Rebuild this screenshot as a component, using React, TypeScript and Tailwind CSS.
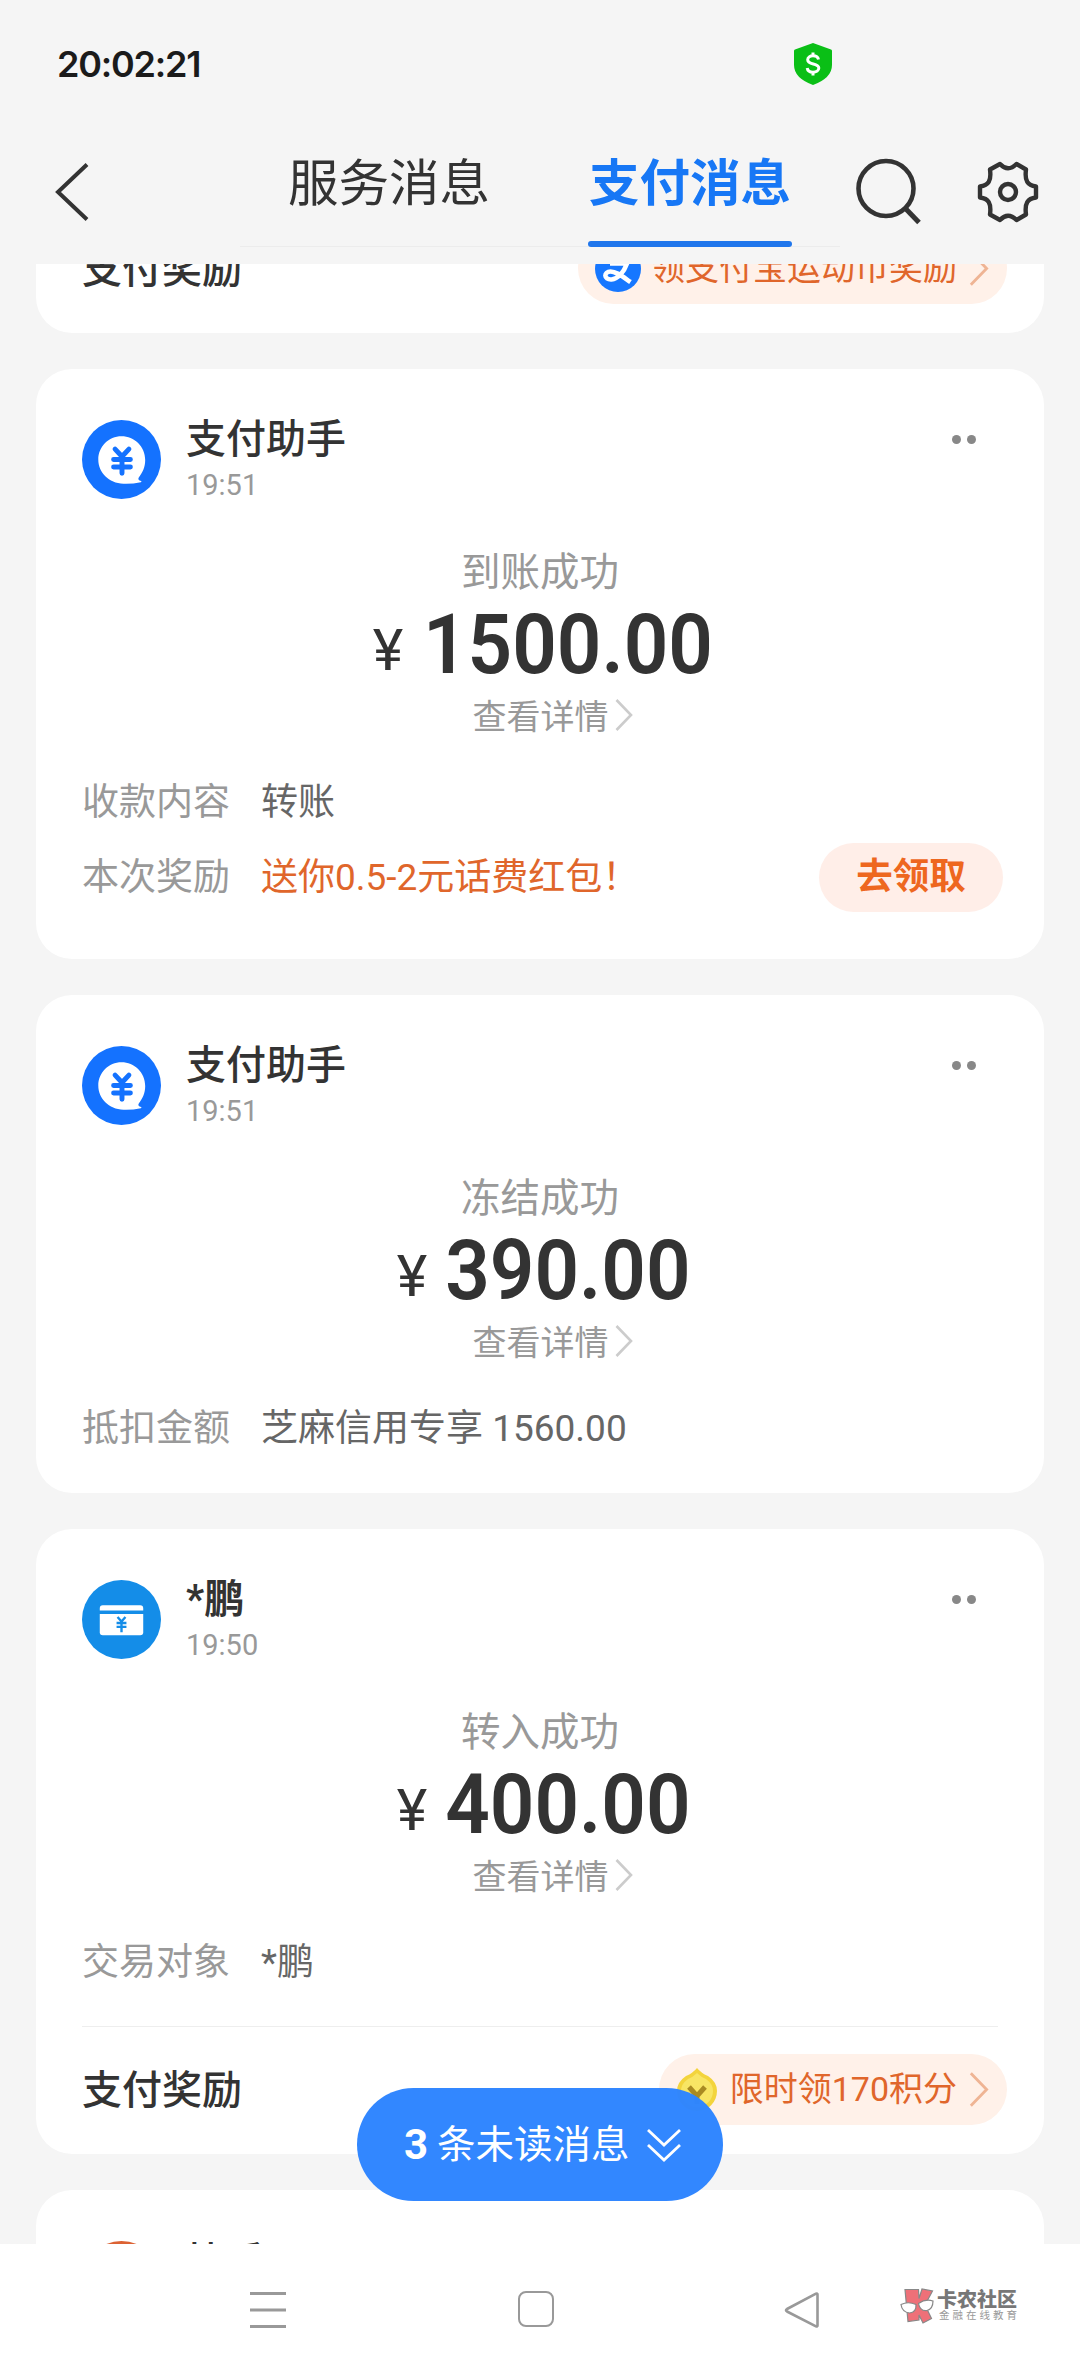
import type { ReactNode } from "react";

type Row = {
  label: string;
  value: string;
  highlight?: boolean;
  action?: string;
};

type Message = {
  id: number;
  icon: "assistant" | "wallet";
  sender: string;
  time: string;
  title: string;
  amount: string;
  rows: Row[];
  height: string;
};

const messages: Message[] = [
  {
    id: 1,
    icon: "assistant",
    sender: "支付助手",
    time: "19:51",
    title: "到账成功",
    amount: "1500.00",
    rows: [
      { label: "收款内容", value: "转账" },
      {
        label: "本次奖励",
        value: "送你0.5-2元话费红包！",
        highlight: true,
        action: "去领取",
      },
    ],
    height: "h-[590px]",
  },
  {
    id: 2,
    icon: "assistant",
    sender: "支付助手",
    time: "19:51",
    title: "冻结成功",
    amount: "390.00",
    rows: [{ label: "抵扣金额", value: "芝麻信用专享 1560.00" }],
    height: "h-[498px]",
  },
  {
    id: 3,
    icon: "wallet",
    sender: "*鹏",
    time: "19:50",
    title: "转入成功",
    amount: "400.00",
    rows: [{ label: "交易对象", value: "*鹏" }],
    height: "h-[497px]",
  },
];

function AssistantIcon() {
  return (
    <svg viewBox="0 0 80 80" className="size-[79px] shrink-0" fill="none">
      <circle cx="40" cy="40" r="40" fill="#1472ff" />
      <path
        d="M40 16.500C27 16.500 16.500 27 16.500 40S27 64 42 64.500q9 .3 17.500-1.500c1.200-.4.800-1.200-.5-1.600-1.700-.5-2.500-1.700-1.500-3.200C61.500 53 64 47.500 64 40.500 64 27 53 16.500 40 16.500Z"
        fill="#fff"
      />
      <path
        d="M33.500 29.500l7 7.500 7-7.500M32 40h17M32 47.500h17M40.500 38v16"
        stroke="#1472ff"
        strokeWidth="5"
        strokeLinecap="round"
      />
    </svg>
  );
}

function WalletIcon() {
  return (
    <svg viewBox="0 0 80 80" className="size-[79px] shrink-0" fill="none">
      <circle cx="40" cy="40" r="40" fill="#148de8" />
      <path d="M18 31v-2.500a3 3 0 0 1 3-3h38a3 3 0 0 1 3 3V31Z" fill="#fff" />
      <path d="M18 34.500h44V53a3 3 0 0 1-3 3H21a3 3 0 0 1-3-3Z" fill="#fff" />
      <path
        d="M36 37.500l4 4.500 4-4.500M35 43.500h10M35 47.500h10M40 42v11"
        stroke="#148de8"
        strokeWidth="2.400"
      />
    </svg>
  );
}

function ChevronRight({ className }: { className: string }) {
  return (
    <svg
      viewBox="0 0 18 34"
      className={`shrink-0 ${className}`}
      fill="none"
      stroke="currentColor"
      strokeWidth="2.600"
    >
      <path d="M1.500 2 16 17 1.500 32" />
    </svg>
  );
}

function StatusBar() {
  return (
    <div className="flex h-32 items-center pl-[57px]">
      <span className="w-[737px] font-['Inter','Noto_Sans_CJK_SC',sans-serif] text-[36px] font-semibold tracking-[-1.200px] text-[#1b1b1b]">
        20:02:21
      </span>
      <svg viewBox="0 0 38 42" className="h-[42px] w-[38px]" fill="none">
        <path
          d="M19 0 37 6.500q1 .4 1 1.500v14q0 13-19 20Q0 35 0 22V8q0-1.100 1-1.500Z"
          fill="#0abf16"
        />
        <path
          d="M24.500 16.500c-.5-2.500-2.700-3.700-5.500-3.700-3 0-5.300 1.500-5.300 4 0 5.700 11.100 2.700 11.100 8.200 0 2.600-2.500 4.200-5.800 4.200-3.100 0-5.400-1.400-5.800-4.200M19 9.500v3.500M19 29v3.500"
          stroke="#fff"
          strokeWidth="3"
        />
      </svg>
    </div>
  );
}

function Header() {
  return (
    <header className="flex h-[136px] items-start">
      <svg
        viewBox="0 0 40 64"
        className="mt-8 ml-[52px] h-16 w-10"
        fill="none"
        stroke="#333"
        strokeWidth="4"
      >
        <path d="M35 4.500 6 32l29 27.500" />
      </svg>
      <nav className="ml-[148px] flex h-[119px] w-[600px] border-b border-[#ececec] text-[50.500px] leading-[50px]">
        <span className="ml-[48px] w-[202px] pt-[26px] text-[#333]">
          服务消息
        </span>
        <span className="-mb-px ml-[98px] flex h-[119px] flex-col justify-between pt-[26px] font-bold text-[#1777f5]">
          <span className="text-center">支付消息</span>
          <span className="h-[6px] w-[204px] rounded-full bg-[#1f76ec]" />
        </span>
      </nav>
      <svg
        viewBox="0 0 68 70"
        className="mt-[29px] ml-[14px] h-[70px] w-[68px]"
        fill="none"
        stroke="#333"
        strokeWidth="4.600"
      >
        <circle cx="32" cy="31.500" r="27.500" />
        <path d="M51.500 51.500 65 65.500" strokeWidth="5" />
      </svg>
      <svg
        viewBox="0 0 64 64"
        className="mt-8 ml-[54px] size-16"
        fill="none"
        stroke="#333"
        strokeWidth="4.400"
        strokeLinejoin="round"
      >
        <path d="M24 4Q32 12.500 40.500 4L50 9.500C48.500 21 51.500 25.500 60 26.500V37.500C51.500 38.500 48.500 43 50 54.500L40.500 60Q32 51.500 24 60L14 54.500C15.500 43 12.500 38.500 4 37.500V26.500C12.500 25.500 15.500 21 14 9.500Z" />
        <circle cx="32" cy="32" r="8" />
      </svg>
    </header>
  );
}

function RewardBar({ children }: { children: ReactNode }) {
  return (
    <div className="flex h-[71px] items-center justify-between pr-[37px] pl-[46px]">
      <span className="pb-[5px] text-[40px] font-medium text-[#333]">
        支付奖励
      </span>
      <div className="flex h-[71px] items-center rounded-full bg-[#fff1e9] pr-[18px] pl-[17px] font-['Roboto','Noto_Sans_CJK_SC',sans-serif] text-[34px] text-[#e0662b]">
        {children}
        <ChevronRight className="ml-[12px] h-[37px] w-[20px] text-[#efb494]" />
      </div>
    </div>
  );
}

function MessageHeader({
  icon,
  sender,
  time,
}: Pick<Message, "icon" | "sender" | "time">) {
  return (
    <div className="flex h-[79px] font-['Roboto','Noto_Sans_CJK_SC',sans-serif]">
      {icon === "assistant" ? <AssistantIcon /> : <WalletIcon />}
      <div className="ml-[25px] flex-1">
        <div
          className={`text-[40px] leading-[40px] text-[#333] ${icon === "wallet" ? "font-bold" : "font-medium"}`}
        >
          {sender}
        </div>
        <div className="mt-[8px] text-[29px] leading-[34px] text-[#999]">
          {time}
        </div>
      </div>
      <div className="mt-[15px] mr-[22px] flex gap-[6px]">
        <span className="size-[9px] rounded-full bg-[#888]" />
        <span className="size-[9px] rounded-full bg-[#888]" />
      </div>
    </div>
  );
}

function MessageCard({
  message,
  footer,
}: {
  message: Message;
  footer?: ReactNode;
}) {
  return (
    <section className="shrink-0 rounded-[36px] bg-white">
      <div className={`px-[46px] pt-[51px] ${message.height}`}>
        <MessageHeader
          icon={message.icon}
          sender={message.sender}
          time={message.time}
        />
        <div className="mt-[50px] flex flex-col items-center">
          <div className="text-[39.500px] leading-[40px] text-[#999]">
            {message.title}
          </div>
          <div className="mt-[23px] flex h-[66px] items-baseline pl-[3px] font-['Roboto',sans-serif] leading-[66px] text-[#333]">
            <span className="relative -top-[3px] mr-[9px] text-[58px]">¥</span>
            <span className="-mr-[14px] inline-block scale-x-[0.93] text-[84px] font-semibold">
              {message.amount}
            </span>
          </div>
          <div className="mt-[17px] flex items-center pl-[25px] text-[34px] leading-[40px] text-[#999]">
            查看详情
            <ChevronRight className="ml-[6px] h-[34px] w-[18px] text-[#ccc]" />
          </div>
        </div>
        <div className="mt-[30px] font-['Roboto','Noto_Sans_CJK_SC',sans-serif]">
          {message.rows.map((row) => (
            <div
              key={row.label}
              className="flex h-[75px] items-center text-[37px]"
            >
              <span className="w-[179px] text-[#999]">{row.label}</span>
              <span
                className={row.highlight ? "text-[#e0662b]" : "text-[#666]"}
              >
                {row.value}
              </span>
              {row.action ? (
                <button className="mr-[-5px] ml-auto h-[69px] w-[184px] rounded-full bg-[#ffeee8] pb-[2px] text-[36.500px] leading-[67px] font-bold text-[#ee671f]">
                  {row.action}
                </button>
              ) : null}
            </div>
          ))}
        </div>
      </div>
      {footer}
    </section>
  );
}

function UnreadPill() {
  return (
    <button className="absolute top-[2088px] left-[357px] flex h-[113px] w-[366px] items-center rounded-full bg-[#2e85ff]/98 pl-[47px] text-[38.500px] text-white">
      <span className="font-['Roboto',sans-serif] text-[42px] font-bold">
        3
      </span>
      <span className="ml-[9px] pb-[5px]">条未读消息</span>
      <svg
        viewBox="0 0 36 34"
        className="ml-[16px] h-[34px] w-9"
        fill="none"
        stroke="currentColor"
        strokeWidth="2.800"
      >
        <path d="M2 2l16 15L34 2M2 17l16 15 16-15" />
      </svg>
    </button>
  );
}

function SystemNav() {
  return (
    <footer className="flex h-[132px] bg-white pt-[47px]">
      <svg
        viewBox="0 0 38 38"
        className="ml-[249px] size-[38px]"
        stroke="#999"
        strokeWidth="3"
      >
        <path d="M1 2.500h36M1 19h36M1 35.500h36" />
      </svg>
      <div className="ml-[231px] size-9 rounded-[8px] border-[2.500px] border-[#999]" />
      <svg
        viewBox="0 0 38 38"
        className="ml-[229px] size-[38px]"
        fill="none"
        stroke="#999"
        strokeWidth="2.600"
        strokeLinejoin="round"
      >
        <path d="M34.500 3.500v31q0 1.500-1.500.8L4 20.500q-2-1.200 0-2.500L33 2.700q1.500-.7 1.500.8Z" />
      </svg>
      <div className="-mt-[3px] ml-[79px] flex h-[38px]">
        <svg viewBox="0 0 34 36" className="h-9 w-[34px]" fill="none">
          <path
            d="M5 1.500h13.500l.5 9 3-9.500 10.500 2-7.500 14 6.500 13.500-8.500 4.500-4-8v5L8 33.500Z"
            fill="#ee7078"
            stroke="#888"
            strokeWidth="1.200"
          />
          <path
            d="M1 16.500q7-3.500 15 0 .5 8-6.500 8.500Q2 24 1 16.500ZM18.500 15.500q7-5 14.500-2.500 0 8-6 9.500-7 1-8.500-7Z"
            fill="#fff"
            stroke="#888"
            strokeWidth="1.200"
          />
        </svg>
        <div className="ml-[3px] text-[#777]">
          <div className="text-[20px] leading-[21px] font-black">卡农社区</div>
          <div className="ml-[2px] text-[10.500px] leading-[12px] tracking-[3px] text-[#999]">
            金融在线教育
          </div>
        </div>
      </div>
    </footer>
  );
}

export default function App() {
  return (
    <div className="relative flex h-[2376px] w-[1080px] flex-col overflow-hidden bg-[#f5f5f5] font-['Noto_Sans_CJK_SC',sans-serif] whitespace-nowrap">
      <StatusBar />
      <Header />
      <main className="flex h-[1980px] flex-col gap-9 overflow-hidden px-9">
        <section className="flex h-[69px] shrink-0 flex-col justify-end rounded-b-[36px] bg-white pb-[29px]">
          <RewardBar>
            <svg
              viewBox="0 0 46 46"
              className="mr-[10px] size-[46px]"
              fill="none"
              stroke="#fff"
            >
              <circle cx="23" cy="23" r="23" fill="#1677ff" stroke="none" />
              <path
                d="M14 11h19M24 6v11M15 17.500h17C29 26 23 33 16.500 33.500c-8 .5-8-8-1-8 6 0 12 5 20 10.500"
                strokeWidth="4.600"
              />
            </svg>
            领支付宝运动币奖励
          </RewardBar>
        </section>
        {messages.map((message) => (
          <MessageCard
            key={message.id}
            message={message}
            footer={
              message.id === 3 ? (
                <div className="pb-[29px]">
                  <div className="mr-[46px] mb-[27px] ml-[46px] h-px bg-[#eee]" />
                  <RewardBar>
                    <svg
                      viewBox="0 0 42 46"
                      className="mr-[12px] h-[46px] w-[42px]"
                      fill="none"
                    >
                      <path
                        d="M21 1q4 5 11 8 9 6 9 15a20 20 0 0 1-40 0q0-9 9-15 7-3 11-8Z"
                        fill="#f3d43c"
                      />
                      <path
                        d="M21 6q4 4 9 6 7 5 7 12a16 16 0 0 1-32 0q0-7 7-12 5-2 9-6Z"
                        fill="#f8e564"
                      />
                      <path
                        d="M13 20l8 9 8-9M21 28v9"
                        stroke="#a98a22"
                        strokeWidth="5"
                      />
                    </svg>
                    限时领170积分
                  </RewardBar>
                </div>
              ) : null
            }
          />
        ))}
        <section className="flex h-[400px] shrink-0 rounded-t-[36px] bg-white pt-[51px] pl-[46px]">
          <div className="size-[79px] rounded-full bg-[#dc6233]" />
          <div className="-mt-[2px] ml-[25px] text-[40px] leading-[40px] font-medium text-[#333]">
            快手
          </div>
        </section>
      </main>
      <SystemNav />
      <UnreadPill />
    </div>
  );
}
